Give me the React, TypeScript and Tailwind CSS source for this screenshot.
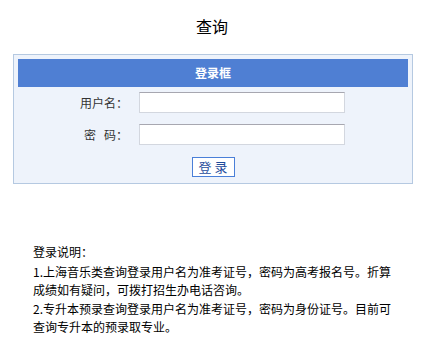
const font = "font-['Noto_Sans_CJK_SC',sans-serif]";

function Field({ label, type }: { label: React.ReactNode; type: string }) {
  return (
    <div className="flex h-[21px] items-center">
      <label className="w-[110px] text-right text-[12px] text-[#333]">{label}</label>
      <input
        type={type}
        className="ml-[11px] h-[21px] w-[206px] border border-[#d3d7df] border-t-[#a7a7b0] bg-white outline-none"
      />
    </div>
  );
}

export default function App() {
  return (
    <div className={`min-h-[347px] w-[424px] bg-white text-black ${font}`}>
      <div className="pb-[16px] pt-[14px] text-center text-[16px] leading-[24px]">查询</div>

      <div className="ml-[13px] w-[400px] border border-[#b5c9e1] bg-[#eef3fb] p-[4px]">
        <div className="h-[28px] bg-[#4f7fd3] text-center text-[12px] font-bold leading-[28px] text-white">
          登录框
        </div>
        <div className="mt-[5px]">
          <Field label="用户名：" type="text" />
        </div>
        <div className="mt-[11px]">
          <Field
            label={
              <>
                密<span className="inline-block w-[8px]" />码：
              </>
            }
            type="password"
          />
        </div>
        <div className="mb-[2px] mt-[12px] flex justify-center">
          <button className="h-[20px] w-[43px] border border-[#4a7fd8] bg-white text-[13px] leading-[18px] text-[#1f4c9c]">
            登 录
          </button>
        </div>
      </div>

      <div className="ml-[33px] mt-[59px] w-[362px] text-[12px] leading-[18px]">
        <p>登录说明：</p>
        <p className="mt-[2px]">1.上海音乐类查询登录用户名为准考证号，密码为高考报名号。折算成绩如有疑问，可拨打招生办电话咨询。</p>
        <p className="mt-[1px]">2.专升本预录查询登录用户名为准考证号，密码为身份证号。目前可查询专升本的预录取专业。</p>
      </div>
    </div>
  );
}
